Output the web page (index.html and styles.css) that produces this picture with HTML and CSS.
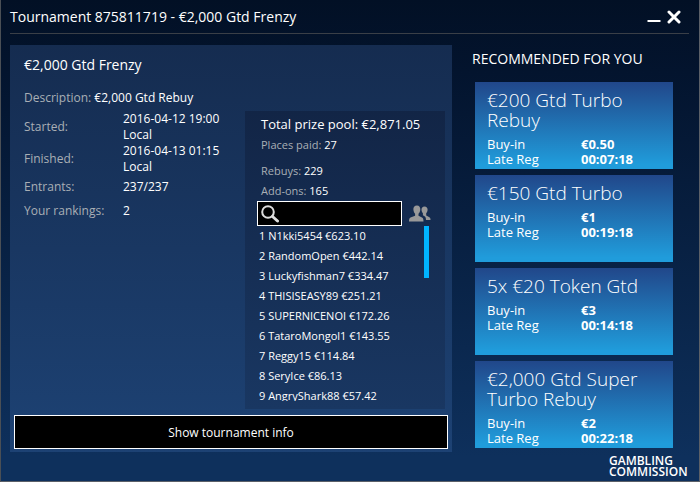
FILE: index.html
```html
<!DOCTYPE html>
<html lang="en">
<head>
  <meta charset="UTF-8"/>
  <title>Tournament 875811719</title>
  <link rel="stylesheet" href="styles.css">
</head>
<body>
  <div class="window">
    <header class="titlebar">
      <h1>Tournament 875811719 - €2,000 Gtd Frenzy</h1>
      <div class="controls">
        <button type="button" aria-label="Minimise">
          <svg width="14" height="14" viewBox="0 0 14 14"><path d="M0.5 11h13" stroke="#fff" stroke-width="2"/></svg>
        </button>
        <button type="button" aria-label="Close">
          <svg width="14" height="14" viewBox="0 0 14 14"><path d="M2 2l10 10M12 2L2 12" stroke="#fff" stroke-width="3" stroke-linecap="round"/></svg>
        </button>
      </div>
    </header>

    <div class="content">
      <main class="panel">
        <h2>€2,000 Gtd Frenzy</h2>
        <p class="description"><span class="label">Description:</span> €2,000 Gtd Rebuy</p>

        <div class="details">
          <table class="stats">
            <tr><th scope="row">Started:</th><td>2016-04-12 19:00 Local</td></tr>
            <tr><th scope="row">Finished:</th><td>2016-04-13 01:15 Local</td></tr>
            <tr><th scope="row">Entrants:</th><td>237/237</td></tr>
            <tr><th scope="row">Your rankings:</th><td>2</td></tr>
          </table>

          <section class="prizes">
            <h3>Total prize pool: €2,871.05</h3>
            <p class="places"><span class="label">Places paid:</span> 27</p>
            <p><span class="label">Rebuys:</span> 229</p>
            <p><span class="label">Add-ons:</span> 165</p>

            <div class="search">
              <label class="search-box">
                <svg width="18" height="18" viewBox="0 0 18 18" fill="none" stroke="#ddd"><circle cx="7" cy="7" r="5.8" stroke-width="2"/><path d="M11.500 11.500l5 4.500" stroke-width="3" stroke-linecap="round"/></svg>
                <input type="text" aria-label="Find player">
              </label>
              <svg class="players-icon" width="22" height="17" viewBox="0 0 22 17" fill="#999"><path d="M8 0.5c-2.600 0-3.800 1.700-3.600 4 .1 2 .8 3.300 1.700 4.200v2.100L1.500 12.500C.5 13 0 14 0 16.500h14.500c0-2.500-.4-3.500-1.500-4l-3.500-1.700V8.700c1-.9 1.700-2.300 1.800-4.200.1-2.300-1-4-3.300-4z"/><path d="M15.500 1.500c-1.900 0-3.100 1.400-3 3.300.1 1.500.6 2.700 1.400 3.500v2l1.600 1c1 .6 1.400 1.500 1.500 3.700h4.500c0-1.800-.5-2.600-1.500-3l-2.800-1.500V8.300c.8-.8 1.300-2 1.400-3.500.1-1.900-1.100-3.300-3.100-3.300z"/></svg>
            </div>

            <div class="players">
              <ul>
                <li>1 N1kki5454 €623.10</li>
                <li>2 RandomOpen €442.14</li>
                <li>3 Luckyfishman7 €334.47</li>
                <li>4 THISISEASY89 €251.21</li>
                <li>5 SUPERNICENOI €172.26</li>
                <li>6 TataroMongol1 €143.55</li>
                <li>7 Reggy15 €114.84</li>
                <li>8 SeryIce €86.13</li>
                <li>9 AngryShark88 €57.42</li>
              </ul>
              <div class="scroll-thumb"></div>
            </div>
          </section>
        </div>

        <button type="button" class="info-button">Show tournament info</button>
      </main>

      <aside class="recommended">
        <h2>RECOMMENDED FOR YOU</h2>
        <div class="cards">
          <article class="card">
            <h3>€200 Gtd Turbo Rebuy</h3>
            <dl><dt>Buy-in</dt><dd>€0.50</dd><dt>Late Reg</dt><dd>00:07:18</dd></dl>
          </article>
          <article class="card">
            <h3>€150 Gtd Turbo</h3>
            <dl><dt>Buy-in</dt><dd>€1</dd><dt>Late Reg</dt><dd>00:19:18</dd></dl>
          </article>
          <article class="card">
            <h3>5x €20 Token Gtd</h3>
            <dl><dt>Buy-in</dt><dd>€3</dd><dt>Late Reg</dt><dd>00:14:18</dd></dl>
          </article>
          <article class="card">
            <h3>€2,000 Gtd Super Turbo Rebuy</h3>
            <dl><dt>Buy-in</dt><dd>€2</dd><dt>Late Reg</dt><dd>00:22:18</dd></dl>
          </article>
        </div>
        <p class="commission">GAMBLING<br>COMMISSION</p>
      </aside>
    </div>
  </div>
</body>
</html>
```
FILE: styles.css
```css
* {
  box-sizing: border-box;
}
body {
  margin: 0;
  font-family: "Open Sans", "Noto Sans", sans-serif;
  font-size: 12px;
  color: #fff;
  background: #02112b;
}
h1, h2, h3, p, ul, dl, dd {
  margin: 0;
  padding: 0;
  font-weight: 400;
}
button {
  font-family: inherit;
  color: inherit;
  cursor: pointer;
}
svg {
  display: block;
  flex-shrink: 0;
}
.window {
  min-height: 100vh;
  padding: 0 10px 0 9px;
  border: 1px solid #5b6068;
  border-top: 0;
  border-left-color: #4a4f55;
  background: linear-gradient(#021025, #03142e 15%, #0e305c 95%);
}

/* title bar */
.titlebar {
  display: flex;
  justify-content: space-between;
  align-items: center;
  height: 34px;
  border-bottom: 1px solid #3a3f47;
}
.titlebar h1 {
  font-size: 14px;
  line-height: 20px;
}
.controls {
  display: flex;
  gap: 6px;
  padding-right: 8px;
}
.controls button {
  padding: 0;
  border: 0;
  background: none;
}
.content {
  display: flex;
  align-items: flex-start;
  gap: 20px;
  padding-top: 11px;
}

/* tournament panel */
.panel {
  flex: 1;
  min-width: 0;
  padding: 10px 4px 3px;
  background: linear-gradient(#152c50, #1d4274);
}
.panel h2 {
  padding-left: 10px;
  font-size: 14px;
  line-height: 20px;
}
.description {
  padding: 14px 0 4px 10px;
  line-height: 18px;
}
.label, .stats th {
  color: #a9afb5;
}
.details {
  display: flex;
  justify-content: space-between;
  padding-right: 3px;
}
.stats {
  width: 226px;
  align-self: flex-start;
  border-collapse: collapse;
  line-height: 16px;
}
.stats th, .stats td {
  height: 24px;
  padding: 0;
  text-align: left;
  font-weight: 400;
}
.stats th {
  width: 109px;
  padding-left: 10px;
}
.stats td {
  padding-right: 8px;
}
.prizes {
  width: 200px;
  padding: 2px 12px 8px;
  background: linear-gradient(#122546, #193762);
}
.prizes h3 {
  padding-left: 4px;
  font-size: 13px;
  line-height: 22px;
}
.prizes p {
  padding-left: 4px;
  font-size: 11px;
  line-height: 20px;
}
.prizes .places {
  padding-bottom: 6px;
}
.search {
  display: flex;
  align-items: center;
  gap: 7px;
  margin-right: 2px;
}
.search-box {
  flex: 1;
  display: flex;
  align-items: center;
  min-width: 0;
  height: 25px;
  padding-left: 3px;
  border: 1px solid #fff;
  background: #000;
}
.search-box input {
  flex: 1;
  min-width: 0;
  border: 0;
  outline: 0;
  font: inherit;
  color: #fff;
  background: none;
}
.players {
  display: flex;
  justify-content: space-between;
  height: 175px;
  overflow: hidden;
  padding-right: 4px;
}
.players ul {
  padding-left: 2px;
  list-style: none;
  font-size: 11px;
  line-height: 20px;
}
.scroll-thumb {
  width: 5px;
  height: 52px;
  background: #00b4ff;
}
.info-button {
  display: block;
  width: 100%;
  height: 34px;
  margin-top: 6px;
  border: 1px solid #fff;
  font-size: 12px;
  background: #000;
}

/* sidebar */
.recommended {
  width: 217px;
  padding-top: 4px;
}
.recommended h2 {
  font-size: 14px;
  line-height: 20px;
}
.cards {
  display: grid;
  gap: 6px;
  padding: 13px 16px 7px 3px;
}
.card {
  min-height: 87px;
  padding: 8px 12px 0;
  background: linear-gradient(#21478a, #209cdb 95%);
}
.card h3 {
  font-size: 19px;
  font-weight: 300;
  line-height: 20px;
}
.card dl {
  display: grid;
  grid-template-columns: 94px 1fr;
  padding-top: 7px;
  font-size: 13px;
  line-height: 15px;
}
.card dd {
  font-weight: 700;
}
.commission {
  width: 80px;
  margin-left: auto;
  font-size: 12px;
  font-weight: 600;
  line-height: 11px;
}
```
